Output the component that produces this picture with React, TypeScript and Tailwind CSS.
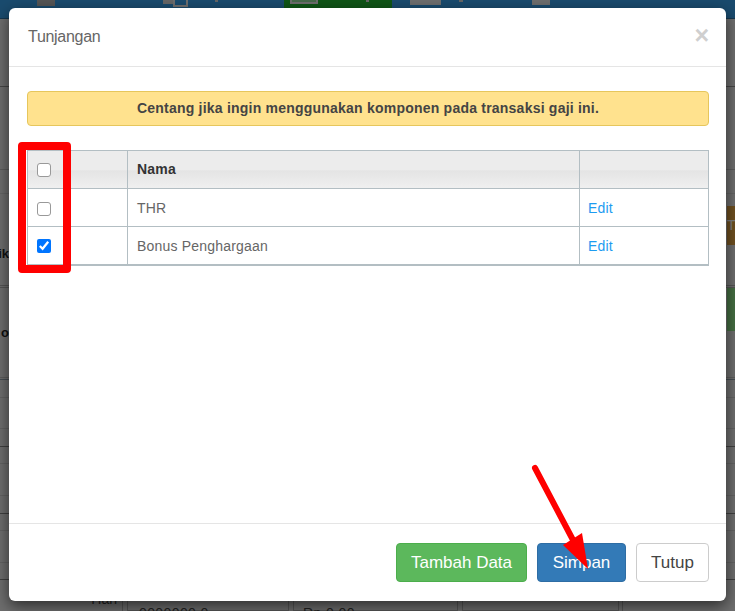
import React from "react";

const rows: { end: number; line: string; right?: string; label?: string; labelShift?: boolean; rightText?: string }[] = [
  { end: 87, line: "border-[#8c8c8c]" },
  { end: 170, line: "border-[#b8b8b8]" },
  { end: 194, line: "border-[#c8c8c8]" },
  { end: 206, line: "border-transparent" },
  { end: 246, line: "border-transparent", right: "bg-[#dc9e40]", rightText: "T" },
  { end: 286, line: "border-[#a8a8a8]", label: "ik" },
  { end: 288, line: "border-[#a8a8a8]" },
  { end: 332, line: "border-transparent", right: "bg-[#8bdc85]" },
  { end: 378, line: "border-[#b8b8b8]", label: "o", labelShift: true },
  { end: 380, line: "border-[#8c9aa6]" },
  { end: 398, line: "border-[#c4c4c4]" },
  { end: 429, line: "border-[#c4c4c4]" },
  { end: 447, line: "border-[#808080]" },
  { end: 464, line: "border-[#c4c4c4]" },
  { end: 496, line: "border-[#c4c4c4]" },
  { end: 514, line: "border-[#808080]" },
  { end: 531, line: "border-[#c4c4c4]" },
  { end: 563, line: "border-[#c4c4c4]" },
  { end: 580, line: "border-[#808080]" },
];

function Background() {
  let prev = 19;
  return (
    <div className="w-[735px] h-[611px] overflow-hidden bg-[#dcdcdc] font-['Liberation_Sans',sans-serif] text-[#222]">
      <nav className="relative h-[19px] bg-[#3597dd] border-b border-[#2a6f9f] flex items-start">
        <div className="ml-[37px] w-[18px] h-[6px] bg-[#aaa]" />
        <div className="ml-[108px] w-[25px] h-[7px] flex">
          <div className="w-[10px] h-[4px] bg-[#ccc]" />
          <div className="w-[15px] h-[7px] border-2 border-t-0 border-[#ddd]" />
        </div>
        <div className="ml-[27px] w-[3px] h-[2px] bg-[#ccc]" />
        <div className="ml-[66px] w-[108px] h-[18px] bg-[#1fab2c] flex">
          <div className="ml-[6px] w-[28px] h-[4px] border-2 border-t-0 border-[#ddd] bg-[#8fd596]" />
          <div className="ml-[48px] w-[3px] h-[2px] bg-[#ccc]" />
        </div>
        <div className="ml-[18px] w-[31px] h-[5px] bg-[#ddd]" />
        <div className="ml-[18px] w-[4px] h-[2px] bg-[#ccc]" />
        <div className="ml-[69px] w-[18px] h-[5px] bg-[#ddd]" />
      </nav>
      {rows.map((r, i) => {
        const h = r.end - prev;
        prev = r.end;
        return (
          <div key={i} style={{ height: h }} className={`border-b flex justify-between box-border ${r.line}`}>
            <div className={`w-[9px] flex justify-end whitespace-nowrap text-[13px] leading-[16px] font-bold ${r.labelShift ? "-mt-[7px]" : ""}`}>
              {r.label}
            </div>
            {r.right && (
              <div className={`w-[8px] h-full flex items-center text-[14px] text-white ${r.right}`}>
                {r.rightText}
              </div>
            )}
          </div>
        );
      })}
      <div className="flex h-[31px] text-[14px] text-[#444]">
        <div className="w-[123px] border-r border-[#aaa] flex justify-end pr-[5px] pt-[9px]">Hari</div>
        <div className="ml-[4px] w-[162px] border border-[#aaa] pl-[11px] pt-[22px] tracking-[0.4px]">0000000.0</div>
        <div className="ml-[4px] w-[165px] border border-[#aaa] pl-[9px] pt-[22px] tracking-[0.4px]">Rp 0,00</div>
        <div className="ml-[4px] w-[157px] border border-[#aaa]" />
        <div className="ml-[3px] flex-1 border-l border-[#aaa]" />
      </div>
    </div>
  );
}

function Check({ checked }: { checked?: boolean }) {
  return checked ? (
    <input type="checkbox" defaultChecked className="block w-[14px] h-[14px] m-0" />
  ) : (
    <input
      type="checkbox"
      className="block appearance-none w-[14px] h-[14px] m-0 bg-white border-[1.5px] border-[#999] rounded-[3px]"
    />
  );
}

const cell = "border border-[#b3bec3] align-middle";

export default function App() {
  return (
    <div className="relative w-[735px] h-[611px] overflow-hidden font-['Liberation_Sans',sans-serif]">
      <Background />
      <div className="absolute inset-0 bg-black/50" />
      <div className="absolute left-[9px] top-[8px] w-[717px] h-[593px] bg-white rounded-[6px] shadow-[0_5px_15px_rgba(0,0,0,0.6)] flex flex-col">
        <header className="h-[59px] shrink-0 border-b border-[#e5e5e5] flex items-center justify-between pl-[19px] pr-[17px]">
          <h4 className="text-[16px] tracking-[-0.3px] text-[#666]">Tunjangan</h4>
          <span className="text-[25px] font-bold leading-none text-[#cfcfcf] -mt-[3px]">×</span>
        </header>
        <div className="flex-1 pl-[18px] pr-[17px] pt-[24px]">
          <div className="h-[35px] bg-[#ffe28e] border border-[#e6c65c] rounded-[4px] flex items-center justify-center text-[14px] font-bold tracking-[0.22px] text-[#444]">
            Centang jika ingin menggunakan komponen pada transaksi gaji ini.
          </div>
          <table className="mt-[24px] w-[681px] table-fixed border-collapse border-b-2 border-b-[#b3bec3] text-[14px] tracking-[0.2px] text-[#666]">
            <colgroup>
              <col className="w-[100px]" />
              <col className="w-[452px]" />
              <col className="w-[129px]" />
            </colgroup>
            <thead>
              <tr className="h-[38px] bg-[linear-gradient(#ececec_50%,#e4e4e4_52%,#f0f0f0)]">
                <th className={`${cell} px-[9px] pt-[1px]`}><Check /></th>
                <th className={`${cell} px-[9px] text-left font-bold text-[#333]`}>Nama</th>
                <th className={cell} />
              </tr>
            </thead>
            <tbody>
              <tr className="h-[38px]">
                <td className={`${cell} px-[9px] pt-[2px]`}><Check /></td>
                <td className={`${cell} px-[9px] pt-[2px]`}>THR</td>
                <td className={`${cell} px-[8px] pt-[2px] text-[#1d9bf0]`}>Edit</td>
              </tr>
              <tr className="h-[38px]">
                <td className={`${cell} px-[9px] pt-[2px]`}><Check checked /></td>
                <td className={`${cell} px-[9px] pt-[2px]`}>Bonus Penghargaan</td>
                <td className={`${cell} px-[8px] pt-[2px] text-[#1d9bf0]`}>Edit</td>
              </tr>
            </tbody>
          </table>
        </div>
        <footer className="h-[78px] shrink-0 border-t border-[#e5e5e5] flex items-start justify-end gap-[10px] pt-[19px] pr-[17px] text-[17px]">
          <button className="h-[39px] w-[131px] rounded-[4px] bg-[#5cb85c] border border-[#4cae4c] text-white">Tambah Data</button>
          <button className="h-[39px] w-[89px] rounded-[4px] bg-[#337ab7] border border-[#2e6da4] text-white">Simpan</button>
          <button className="h-[39px] w-[73px] rounded-[4px] bg-white border border-[#ccc] text-[#444]">Tutup</button>
        </footer>
      </div>
      <div className="absolute left-[18px] top-[142px] w-[53px] h-[131px] border-[8px] border-[#ff0000] rounded-[4px]" />
      <svg className="absolute left-[525px] top-[460px]" width="70" height="115" viewBox="525 460 70 115" aria-hidden="true">
        <line x1="535" y1="468" x2="573" y2="540" stroke="#ff0000" strokeWidth="6" strokeLinecap="round" />
        <polygon points="563,545 582,533 588,569" fill="#ff0000" />
      </svg>
    </div>
  );
}
